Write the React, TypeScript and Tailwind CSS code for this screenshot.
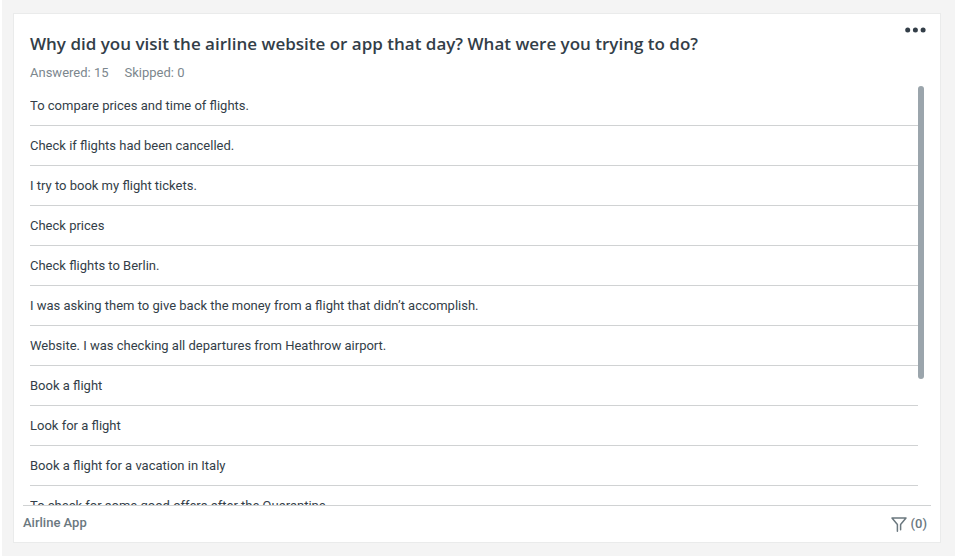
const responses: string[] = [
  'To compare prices and time of flights.',
  'Check if flights had been cancelled.',
  'I try to book my flight tickets.',
  'Check prices',
  'Check flights to Berlin.',
  'I was asking them to give back the money from a flight that didn’t accomplish.',
  'Website. I was checking all departures from Heathrow airport.',
  'Book a flight',
  'Look for a flight',
  'Book a flight for a vacation in Italy',
  'To check for some good offers after the Quarantine.',
];

function MoreIcon() {
  return (
    <svg width="21" height="6" viewBox="0 0 21 6" fill="currentColor" aria-hidden="true">
      <circle cx="2.7" cy="3" r="2.5" />
      <circle cx="10.4" cy="3" r="2.5" />
      <circle cx="18.1" cy="3" r="2.5" />
    </svg>
  );
}

function FilterIcon() {
  return (
    <svg
      width="16"
      height="15"
      viewBox="0 0 16 15"
      fill="none"
      stroke="currentColor"
      strokeWidth="1.5"
      strokeLinejoin="round"
      strokeLinecap="round"
      aria-hidden="true"
    >
      <path d="M6.4 14.2V7.5L1 1h14L9.6 7.5v5.2" />
    </svg>
  );
}

export default function App() {
  return (
    <main className="min-h-screen border-l-2 border-white bg-[#f4f4f4] py-[13px] pl-[11px] pr-[14px] font-['Roboto','Noto_Sans',sans-serif] text-[#333e48]">
      <section className="border border-[#eaebeb] bg-white">
        <header className="flex items-start justify-between pl-4 pr-3 pt-3">
          <div className="pt-1">
            <h1 className="font-['Open_Sans','Noto_Sans',sans-serif] text-[17px]/7 font-semibold">
              Why did you visit the airline website or app that day? What were you trying to do?
            </h1>
            <p className="flex gap-4 pb-[2px] pt-1 text-[13px]/[22px] text-[#7c878e]">
              <span>Answered: 15</span>
              <span>Skipped: 0</span>
            </p>
          </div>
          <button type="button" aria-label="More options" className="flex px-[2px] py-[1px]">
            <MoreIcon />
          </button>
        </header>

        <div className="flex h-[419px] items-start px-4">
          <ul className="h-full flex-1 overflow-hidden">
            {responses.map((text) => (
              <li key={text} className="h-10 border-b border-[#d0d2d3] text-[13px]/10">
                {text}
              </li>
            ))}
          </ul>
          <div className="h-[293px] w-[6px] rounded-full bg-[#9ba5ac]" />
        </div>

        <footer className="mx-[9px] flex h-[37px] items-center justify-between border-t border-[#d0d2d3] text-[13px] font-medium text-[#6b787f]">
          <span className="pb-[2px]">Airline App</span>
          <button type="button" aria-label="Filters (0)" className="flex items-center gap-1 pr-1">
            <FilterIcon />
            <span>(0)</span>
          </button>
        </footer>
      </section>
    </main>
  );
}
